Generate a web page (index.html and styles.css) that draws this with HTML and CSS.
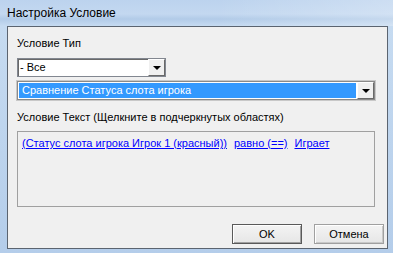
FILE: index.html
```html
<!DOCTYPE html>
<html lang="ru">
<head>
    <meta charset="UTF-8">
    <meta name="viewport" content="width=device-width, initial-scale=1.0">
    <title>Настройка Условие</title>
    <link rel="stylesheet" href="styles.css">
</head>
<body>
    <div class="window">
        <div class="titlebar">Настройка Условие</div>
        <div class="client">
            <div class="content">
                <div class="label">Условие Тип</div>
                <div class="combo combo-small">
                    <span class="combo-value">- Все</span>
                    <span class="combo-btn"><span class="arrow"></span></span>
                </div>
                <div class="combo combo-wide">
                    <span class="combo-value selected">Сравнение Статуса слота игрока</span>
                    <span class="combo-btn"><span class="arrow"></span></span>
                </div>
                <div class="label label-text">Условие Текст (Щелкните в подчеркнутых областях)</div>
                <div class="text-box">
                    <a href="#">(Статус слота игрока Игрок 1 (красный))</a>
                    <a href="#">равно (==)</a>
                    <a href="#">Играет</a>
                </div>
            </div>
            <div class="buttons">
                <button class="btn btn-default">OK</button>
                <button class="btn">Отмена</button>
            </div>
        </div>
    </div>
</body>
</html>
```

FILE: styles.css
```css
body {
    margin: 0;
    font-family: "Liberation Sans", Arial, sans-serif;
    font-size: 11px;
    color: #000;
}
.window {
    width: 393px;
    height: 253px;
    display: flex;
    flex-direction: column;
    background: linear-gradient(180deg, #bcd3ee 0px, #c3d8f0 14px, #b2cbe8 19px, #c6dbf1 26px, #b4cdea 100%);
    box-sizing: border-box;
}
.titlebar {
    height: 26px;
    line-height: 26px;
    padding-left: 7px;
    font-size: 12px;
    background: linear-gradient(90deg, rgba(255,255,255,0) 0, rgba(255,255,255,0) 55%, rgba(255,255,255,0.25) 100%);
}
.client {
    flex: 1;
    display: flex;
    flex-direction: column;
    margin: 0 5px 4px 7px;
    background: #f0f0f0;
    border: 1px solid #5b6470;
}
.content {
    padding: 10px 11px 0 9px;
}
.label {
    line-height: 13px;
    margin-bottom: 8px;
}
.label-text {
    margin-top: 11px;
    margin-bottom: 7px;
}
.combo {
    display: flex;
    height: 19px;
    box-sizing: border-box;
    background: #fff;
    border: 1px solid #828790;
    box-shadow: inset 1px 1px 0 #696969;
    margin-bottom: 4px;
}
.combo-small {
    width: 149px;
}
.combo-wide {
    width: 358px;
    border-color: #8a8a8a;
    box-shadow: 0 0 0 1px #c8c8c8;
}
.combo-value {
    flex: 1;
    padding-left: 2px;
    line-height: 17px;
    white-space: nowrap;
    overflow: hidden;
}
.combo-value.selected {
    margin: 1px;
    padding-left: 3px;
    line-height: 15px;
    background: #3399ff;
    color: #fff;
}
.combo-btn {
    width: 17px;
    display: flex;
    align-items: center;
    justify-content: center;
    background: #f0f0f0;
    border-top: 1px solid #fff;
    border-left: 1px solid #fff;
    border-right: 1px solid #696969;
    border-bottom: 1px solid #696969;
    box-sizing: border-box;
}
.arrow {
    width: 0;
    height: 0;
    border-left: 4px solid transparent;
    border-right: 4px solid transparent;
    border-top: 4px solid #000;
    margin-top: 1px;
}
.text-box {
    height: 76px;
    box-sizing: border-box;
    width: 358px;
    border: 1px solid #a0a0a0;
    padding: 5px 4px;
    display: flex;
    gap: 7px;
    align-items: flex-start;
}
.text-box a {
    color: #0000ff;
    line-height: 13px;
    white-space: nowrap;
}
.buttons {
    margin-top: auto;
    display: flex;
    justify-content: flex-end;
    gap: 12px;
    padding: 0 3px 4px 0;
}
.btn {
    width: 70px;
    height: 20px;
    padding: 0;
    font-family: "Liberation Sans", Arial, sans-serif;
    font-size: 11px;
    color: #000;
    background: linear-gradient(180deg, #f4f4f4, #e6e6e6);
    border: 1px solid #a0a0a0;
    box-shadow: inset 1px 1px 0 #fff, inset -1px -1px 0 #c8c8c8;
}
.btn-default {
    border-color: #5a5a5a;
    box-shadow: inset 1px 1px 0 #fff, inset -1px -1px 0 #a0a0a0;
}
```
